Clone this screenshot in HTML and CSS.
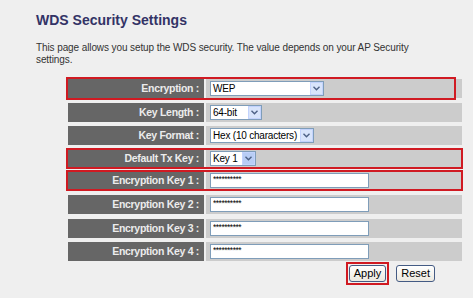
FILE: index.html
```html
<!DOCTYPE html>
<html lang="en">
<head>
  <meta charset="UTF-8" />
  <title>WDS Security Settings</title>
  <link rel="stylesheet" href="styles.css">
</head>
<body>

<div class="page">
  <h1>WDS Security Settings</h1>
  <p class="intro">This page allows you setup the WDS security. The value depends on your AP Security settings.</p>

  <div class="form">
    <div class="row mark-short">
      <div class="label">Encryption :</div>
      <div class="value">
        <span class="select sel-enc"><span class="sel-text">WEP</span><span class="arrow"><svg width="7" height="5" viewBox="0 0 7 5"><path d="M0.5 0.8 L3.5 3.8 L6.5 0.8" fill="none" stroke="#4d6185" stroke-width="1.4"/></svg></span></span>
      </div>
    </div>

    <div class="row">
      <div class="label">Key Length :</div>
      <div class="value">
        <span class="select sel-len"><span class="sel-text">64-bit</span><span class="arrow"><svg width="7" height="5" viewBox="0 0 7 5"><path d="M0.5 0.8 L3.5 3.8 L6.5 0.8" fill="none" stroke="#4d6185" stroke-width="1.4"/></svg></span></span>
      </div>
    </div>

    <div class="row">
      <div class="label">Key Format :</div>
      <div class="value">
        <span class="select sel-fmt"><span class="sel-text">Hex (10 characters)</span><span class="arrow"><svg width="7" height="5" viewBox="0 0 7 5"><path d="M0.5 0.8 L3.5 3.8 L6.5 0.8" fill="none" stroke="#4d6185" stroke-width="1.4"/></svg></span></span>
      </div>
    </div>

    <div class="row short mark">
      <div class="label">Default Tx Key :</div>
      <div class="value">
        <span class="select sel-key"><span class="sel-text">Key 1</span><span class="arrow hot"><svg width="7" height="5" viewBox="0 0 7 5"><path d="M0.5 0.8 L3.5 3.8 L6.5 0.8" fill="none" stroke="#4d6185" stroke-width="1.4"/></svg></span></span>
      </div>
    </div>

    <div class="row short mark">
      <div class="label">Encryption Key 1 :</div>
      <div class="value"><input class="key" type="text" value="**********"></div>
    </div>

    <div class="row">
      <div class="label">Encryption Key 2 :</div>
      <div class="value"><input class="key" type="text" value="**********"></div>
    </div>

    <div class="row">
      <div class="label">Encryption Key 3 :</div>
      <div class="value"><input class="key" type="text" value="**********"></div>
    </div>

    <div class="row">
      <div class="label">Encryption Key 4 :</div>
      <div class="value"><input class="key" type="text" value="**********"></div>
    </div>

    <div class="buttons">
      <span class="btn-mark"><button class="btn">Apply</button></span>
      <button class="btn">Reset</button>
    </div>
  </div>
</div>

</body>
</html>
```

FILE: styles.css
```css
html, body {
  margin: 0; padding: 0;
  background: #efefef;
  font-family: 'Liberation Sans', Arial, sans-serif;
  color: #333;
}

.page {
  padding: 12px 0 0 36px;
}

h1 {
  margin: 0;
  font-size: 14px;
  font-weight: 700;
  color: #333366;
  line-height: 16px;
}

.intro {
  margin: 14px 0 0;
  width: 374px;
  font-size: 10px;
  letter-spacing: -0.1px;
  line-height: 12px;
  color: #333;
}

.form {
  margin: 13px 0 0 32px;
  width: 394px;
}

.row {
  position: relative;
  display: grid;
  grid-template-columns: 136px 256px;
  column-gap: 2px;
  height: 19px;
  margin-bottom: 4.6px;
}

.row.short {
  height: 17px;
  margin-top: 1px;
  margin-bottom: 5.6px;
}

.label {
  background: #666;
  color: #ececec;
  font-weight: 700;
  font-size: 10.5px;
  letter-spacing: -0.3px;
  text-align: right;
  padding-right: 5px;
  line-height: 19px;
}

.row.short .label {
  line-height: 17px;
}

.value {
  background: #cccccc;
  display: flex;
  align-items: center;
  padding-left: 4px;
}

/* red highlight boxes */
.mark::after, .mark-short::after {
  content: '';
  position: absolute;
  top: -2px; bottom: -2px;
  left: -2px; right: -1px;
  border: 2px solid #d01a22;
  pointer-events: none;
}

.mark-short::after {
  right: 6px;
}

.select {
  display: inline-flex;
  align-items: center;
  height: 15px;
  background: #fff;
  border: 1px solid #7f9db9;
  box-sizing: border-box;
  font-size: 10px;
  letter-spacing: -0.2px;
  white-space: nowrap;
  color: #000;
}

.sel-text {
  flex: 1;
  padding: 0 3px 0 2px;
}

.arrow {
  flex-shrink: 0;
  width: 13px;
  height: 13px;
  box-sizing: border-box;
  border: 1px solid #c3d3fd;
  background: #d8e4fb;
  display: flex;
  align-items: center;
  justify-content: center;
}

.arrow.hot {
  background: #b8cdf5;
}

.sel-enc { width: 114px; }
.sel-len { width: 52px; }
.sel-key { width: 46px; }

.key {
  width: 159px;
  height: 15px;
  box-sizing: border-box;
  border: 1px solid #7f9db9;
  background: #fff;
  font-family: 'Liberation Sans', Arial, sans-serif;
  font-size: 8.5px;
  letter-spacing: -0.5px;
  padding: 0 2px 3px;
  margin: 0;
  color: #000;
}

.buttons {
  display: flex;
  justify-content: flex-end;
  align-items: center;
  gap: 7px;
  margin-top: -4px;
  padding-right: 27px;
}

.btn-mark {
  border: 2px solid #d01a22;
  padding: 1px;
  display: inline-flex;
}

.btn {
  height: 17px;
  padding: 0 4px;
  font-family: 'Liberation Sans', Arial, sans-serif;
  font-size: 11px;
  color: #000;
  border: 1px solid #445b84;
  border-radius: 3px;
  background: linear-gradient(#ffffff, #ece9e0);
  margin: 0;
}
```
